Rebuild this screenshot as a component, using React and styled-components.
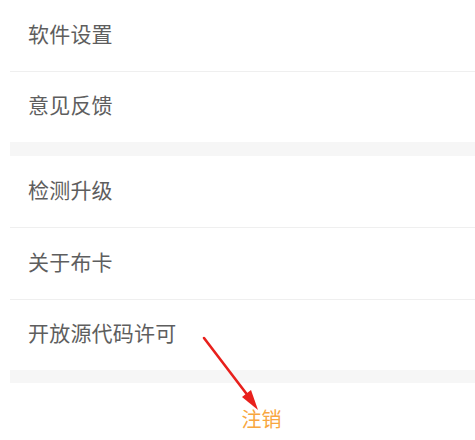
import React from 'react';
import styled, { createGlobalStyle } from 'styled-components';

const GlobalStyle = createGlobalStyle`
  html, body {
    margin: 0;
    padding: 0;
    background: #ffffff;
  }
  body {
    font-family: "Noto Sans CJK SC", "Noto Sans", sans-serif;
  }
`;

const Page = styled.div`
  width: 475px;
  height: 440px;
  background: #ffffff;
  overflow: hidden;
  position: relative;
`;

const Group = styled.div`
  display: flex;
  flex-direction: column;
`;

const Row = styled.div`
  height: ${(props) => (props.last ? 70 : 72)}px;
  box-sizing: border-box;
  display: flex;
  align-items: center;
  margin-left: 10px;
  padding-left: 18px;
  padding-bottom: 6px;
  font-size: 21px;
  color: #5e5e5e;
  letter-spacing: 0.2px;
  border-bottom: ${(props) => (props.last ? 'none' : '1px solid #efefef')};
`;

const Band = styled.div`
  height: ${(props) => props.h}px;
  margin-left: 10px;
  background: #f6f6f6;
`;

const Logout = styled.div`
  height: 57px;
  box-sizing: border-box;
  display: flex;
  align-items: center;
  justify-content: center;
  padding-left: 48px;
  padding-top: 14px;
  font-size: 20px;
  color: #f8a640;
`;

const Arrow = styled.svg`
  position: absolute;
  left: 0;
  top: 0;
  pointer-events: none;
`;

const groups = [
  ['软件设置', '意见反馈'],
  ['检测升级', '关于布卡', '开放源代码许可'],
];

export default function App() {
  return (
    <Page>
      <GlobalStyle />
      <Group>
        {groups[0].map((label, i) => (
          <Row key={label} last={i === groups[0].length - 1}>
            {label}
          </Row>
        ))}
      </Group>
      <Band h={14} />
      <Group>
        {groups[1].map((label, i) => (
          <Row key={label} last={i === groups[1].length - 1}>
            {label}
          </Row>
        ))}
      </Group>
      <Band h={13} />
      <Logout>注销</Logout>
      <Arrow width="475" height="440" viewBox="0 0 475 440">
        <line
          x1="204"
          y1="338"
          x2="252"
          y2="401"
          stroke="#e8201c"
          strokeWidth="2.6"
          strokeLinecap="round"
        />
        <polygon points="258,410 242,397 251,390" fill="#e8201c" />
      </Arrow>
    </Page>
  );
}
